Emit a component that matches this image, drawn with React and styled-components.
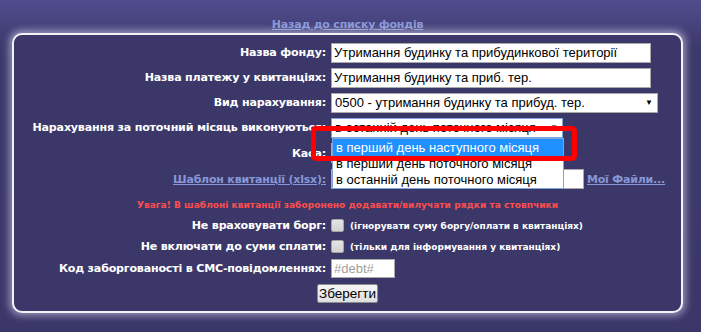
import React from "react";
import styled, { createGlobalStyle } from "styled-components";

const GlobalStyle = createGlobalStyle`
  html, body {
    margin: 0;
    padding: 0;
    background: #3b3869;
  }
  body {
    font-family: "DejaVu Sans", Verdana, sans-serif;
  }
`;

const Page = styled.div`
  width: 701px;
  height: 332px;
  overflow: hidden;
  background: linear-gradient(#514d8e 0px, #3c396b 48px, #3b3869 100%);
`;

const Header = styled.div`
  height: 33px;
  box-sizing: border-box;
  padding-top: 13px;
  text-align: center;
  width: 695px;
`;

const LinkText = styled.a`
  color: #8797d6;
  font-family: "DejaVu Sans", Verdana, sans-serif;
  font-weight: bold;
  font-size: ${(p) => p.$size || 11}px;
  letter-spacing: -0.2px;
  text-decoration: underline;
  cursor: pointer;
  white-space: nowrap;
`;

const Card = styled.div`
  position: relative;
  margin-left: 12px;
  width: 671px;
  height: 280px;
  box-sizing: border-box;
  border: 2px solid #f2f2f7;
  border-radius: 10px;
  background: #3b3869;
  box-shadow: 0 0 7px 3px rgba(230, 230, 255, 0.5);
  padding-top: 5px;
`;

const Row = styled.div`
  display: grid;
  grid-template-columns: 312px 1fr;
  column-gap: 5px;
  align-items: center;
  height: ${(p) => p.$h || 25}px;
`;

const Label = styled.div`
  text-align: right;
  color: #ffffff;
  font-weight: bold;
  font-size: 11.1px;
  letter-spacing: -0.2px;
  white-space: nowrap;
`;

const Field = styled.div`
  position: relative;
  display: flex;
  align-items: center;
  gap: 3px;
`;

const TextBox = styled.div`
  box-sizing: border-box;
  width: ${(p) => p.$w}px;
  height: ${(p) => p.$hgt || 20}px;
  background: #fff;
  border: 1px solid #a9a9a9;
  font-family: "Liberation Sans", Arial, sans-serif;
  font-size: 13px;
  line-height: 18px;
  padding-left: 2px;
  color: ${(p) => (p.$placeholder ? "#a0a0a0" : "#000")};
  white-space: nowrap;
  overflow: hidden;
`;

const SelectBox = styled.div`
  position: relative;
  box-sizing: border-box;
  width: ${(p) => p.$w}px;
  height: 20px;
  background: #fff;
  border: 1px solid ${(p) => (p.$focus ? "#7ea6da" : "#a9a9a9")};
  font-family: "Liberation Sans", Arial, sans-serif;
  font-size: 13px;
  line-height: 18px;
  padding-left: 3px;
  color: #000;
  white-space: nowrap;
`;

const Arrow = styled.span`
  position: absolute;
  right: 4px;
  top: 0;
  font-size: 8px;
  color: #000;
`;

const DropList = styled.div`
  position: absolute;
  left: 0;
  top: 19px;
  width: 232px;
  box-sizing: border-box;
  background: #fff;
  border: 1px solid #7ea6da;
  z-index: 5;
`;

const Option = styled.div`
  height: ${(p) => (p.$active ? 17 : 16)}px;
  line-height: ${(p) => (p.$active ? 17 : 16)}px;
  padding-left: 3px;
  font-family: "Liberation Sans", Arial, sans-serif;
  font-size: 13px;
  background: ${(p) => (p.$active ? "#1e90ff" : "#fff")};
  color: ${(p) => (p.$active ? "#fff" : "#000")};
  white-space: nowrap;
`;

const Highlight = styled.div`
  position: absolute;
  left: -20px;
  top: 8px;
  width: 266px;
  height: 35px;
  box-sizing: border-box;
  border: 5px solid #ff0000;
  border-radius: 5px;
  z-index: 6;
`;

const Note = styled.div`
  height: 20px;
  line-height: 20px;
  text-align: center;
  color: #ff4d4d;
  font-weight: bold;
  font-size: 9px;
  letter-spacing: 0.05px;
  white-space: nowrap;
  padding-top: 3px;
`;

const Check = styled.span`
  display: inline-block;
  box-sizing: border-box;
  width: 13px;
  height: 13px;
  background: linear-gradient(#e4e4e4, #d2d2d2);
  border: 1px solid #a6a6a6;
  border-radius: 2px;
`;

const Hint = styled.span`
  color: #ffffff;
  font-weight: bold;
  font-size: 9px;
  margin-left: 3px;
  white-space: nowrap;
`;

const SaveRow = styled.div`
  display: flex;
  justify-content: center;
  padding-top: 5px;
`;

const SaveButton = styled.button`
  box-sizing: border-box;
  height: 19px;
  padding: 0 1px;
  font-family: "Liberation Sans", Arial, sans-serif;
  font-size: 13.5px;
  line-height: 16px;
  color: #000;
  background: linear-gradient(#f6f6f6, #dedede);
  border: 1px solid #8c8c8c;
  border-radius: 2px;
`;

export default function App() {
  return (
    <Page>
      <GlobalStyle />
      <Header>
        <LinkText $size={11}>Назад до списку фондів</LinkText>
      </Header>
      <Card>
        <Row>
          <Label>Назва фонду:</Label>
          <Field>
            <TextBox $w={320}>Утримання будинку та прибудинкової території</TextBox>
          </Field>
        </Row>
        <Row>
          <Label>Назва платежу у квитанціях:</Label>
          <Field>
            <TextBox $w={320}>Утримання будинку та приб. тер.</TextBox>
          </Field>
        </Row>
        <Row>
          <Label>Вид нарахування:</Label>
          <Field>
            <SelectBox $w={327}>
              0500 - утримання будинку та прибуд. тер.
              <Arrow>▼</Arrow>
            </SelectBox>
          </Field>
        </Row>
        <Row>
          <Label>Нарахування за поточний місяць виконуються:</Label>
          <Field>
            <SelectBox $w={232} $focus>
              в останній день поточного місяця
              <Arrow>▼</Arrow>
              <DropList>
                <Option $active>в перший день наступного місяця</Option>
                <Option>в перший день поточного місяця</Option>
                <Option>в останній день поточного місяця</Option>
              </DropList>
            </SelectBox>
            <Highlight />
          </Field>
        </Row>
        <Row $h={26}>
          <Label>Каса:</Label>
          <Field>
            <SelectBox $w={232} />
          </Field>
        </Row>
        <Row $h={26}>
          <Label>
            <LinkText>Шаблон квитанції (xlsx):</LinkText>
          </Label>
          <Field>
            <TextBox $w={253} />
            <LinkText>Мої Файли...</LinkText>
          </Field>
        </Row>
        <Note>Увага! В шаблоні квитанції заборонено додавати/вилучати рядки та стовпчики</Note>
        <Row $h={21}>
          <Label>Не враховувати борг:</Label>
          <Field>
            <Check />
            <Hint>(ігнорувати суму боргу/оплати в квитанціях)</Hint>
          </Field>
        </Row>
        <Row $h={21}>
          <Label>Не включати до суми сплати:</Label>
          <Field>
            <Check />
            <Hint>(тільки для інформування у квитанціях)</Hint>
          </Field>
        </Row>
        <Row $h={22}>
          <Label>Код заборгованості в СМС-повідомленнях:</Label>
          <Field>
            <TextBox $w={64} $hgt={19} $placeholder>
              #debt#
            </TextBox>
          </Field>
        </Row>
        <SaveRow>
          <SaveButton>Зберегти</SaveButton>
        </SaveRow>
      </Card>
    </Page>
  );
}
